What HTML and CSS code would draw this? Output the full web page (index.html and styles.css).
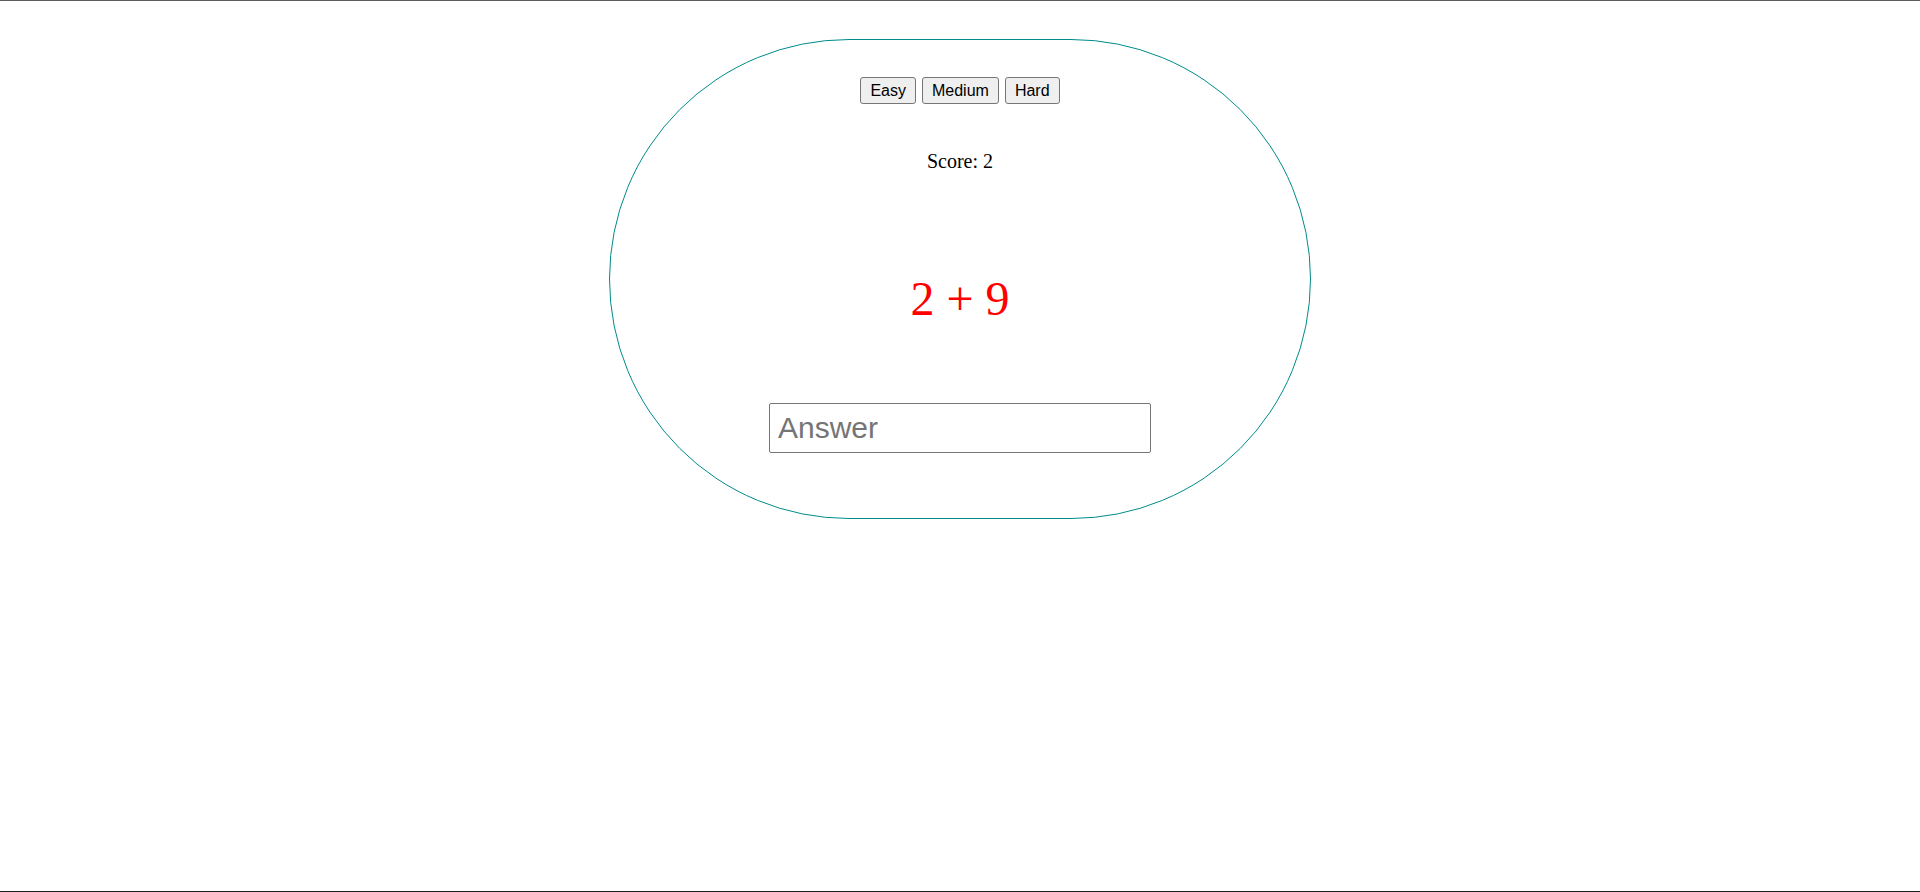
FILE: index.html
```html
<!DOCTYPE html>
<html lang="en">
<head>
<meta charset="utf-8">
<title>Math Game</title>
<link rel="stylesheet" href="styles.css">
</head>
<body>
  <main class="game">
    <div class="levels">
      <button class="level-btn" type="button">Easy</button>
      <button class="level-btn" type="button">Medium</button>
      <button class="level-btn" type="button">Hard</button>
    </div>
    <p class="score">Score: 2</p>
    <p class="problem">2 + 9</p>
    <input class="answer" type="text" placeholder="Answer">
  </main>
</body>
</html>
```
FILE: styles.css
```css
html {
  height: 100%;
  box-sizing: border-box;
  border-top: 1px solid #5c5c5c;
  border-bottom: 1px solid #1f1f1f;
  background: #ffffff;
  overflow: hidden;
}

body {
  margin: 0;
  font-family: "Liberation Serif", "Times New Roman", serif;
  color: #000000;
}

.game {
  box-sizing: border-box;
  width: 702px;
  height: 480px;
  margin: 38px auto 0;
  border: 1px solid #008b8b;
  border-radius: 240px;
  display: flex;
  flex-direction: column;
  align-items: center;
  padding-top: 37px;
}

.levels {
  display: flex;
  gap: 6px;
  justify-content: center;
}

.level-btn {
  font-family: "Liberation Sans", Arial, sans-serif;
  font-size: 16px;
  line-height: 19px;
  color: #000000;
  background: #efefef;
  border: 1px solid #767676;
  border-radius: 3px;
  padding: 3px 9px;
  margin: 0;
}

.score {
  margin: 46px 0 0;
  font-size: 20px;
  line-height: 22px;
}

.problem {
  margin: 100px 0 0;
  font-size: 48px;
  line-height: 53px;
  color: #ff0000;
}

.answer {
  box-sizing: border-box;
  width: 382px;
  height: 50px;
  margin: 78px 0 0;
  padding: 6px 8px;
  font-family: "Liberation Sans", Arial, sans-serif;
  font-size: 30px;
  border: 1px solid #767676;
  border-radius: 2px;
  outline: none;
}

.answer::placeholder {
  color: #757575;
}
```
